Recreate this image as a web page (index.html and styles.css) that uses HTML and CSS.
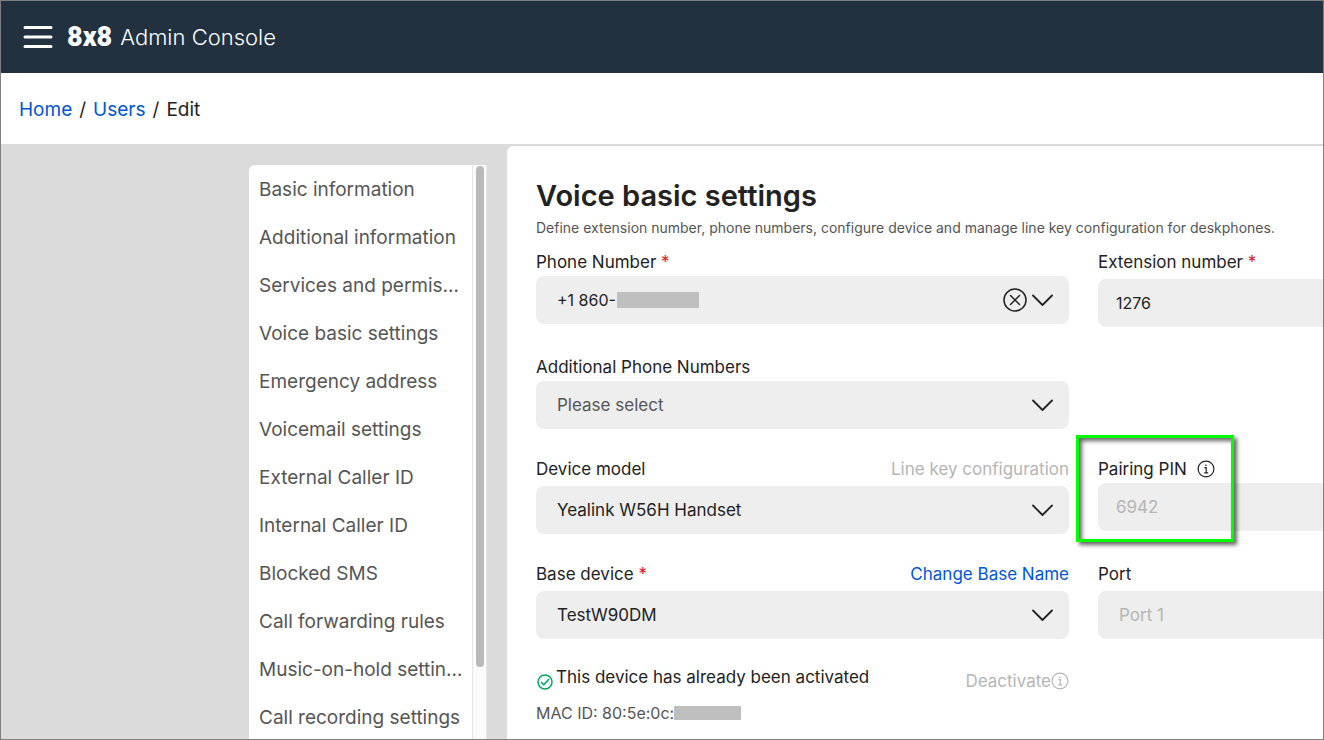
FILE: index.html
```html
<!DOCTYPE html>
<html lang="en">
<head>
    <meta charset="UTF-8">
    <meta name="viewport" content="width=device-width, initial-scale=1.0">
    <title>8x8 Admin Console</title>
    <link rel="stylesheet" href="styles.css">
</head>
<body>
    <header class="topbar">
        <button class="menu-button" type="button" aria-label="Menu">
            <svg width="30" height="24" viewBox="0 0 30 24" fill="none" stroke="#fff" stroke-width="3" stroke-linecap="round">
                <path d="M2 2.5h26M2 12h26M2 21.5h26"/>
            </svg>
        </button>
        <span class="logo">8x8</span>
        <span class="app-name">Admin Console</span>
    </header>

    <nav class="breadcrumb" aria-label="Breadcrumb">
        <a href="#">Home</a>
        <span>/</span>
        <a href="#">Users</a>
        <span>/</span>
        <span>Edit</span>
    </nav>

    <main class="page">
        <aside class="sidebar">
            <nav class="side-nav" aria-label="Sections">
                <a href="#">Basic information</a>
                <a href="#">Additional information</a>
                <a href="#">Services and permissions</a>
                <a href="#">Voice basic settings</a>
                <a href="#">Emergency address</a>
                <a href="#">Voicemail settings</a>
                <a href="#">External Caller ID</a>
                <a href="#">Internal Caller ID</a>
                <a href="#">Blocked SMS</a>
                <a href="#">Call forwarding rules</a>
                <a href="#">Music-on-hold settings</a>
                <a href="#">Call recording settings</a>
            </nav>
            <div class="scrollbar"><div class="thumb"></div></div>
        </aside>

        <section class="panel">
            <h1>Voice basic settings</h1>
            <p class="intro">Define extension number, phone numbers, configure device and manage line key configuration for deskphones.</p>

            <form class="form-grid">
                <div class="field">
                    <div class="label-row">
                        <label for="phone">Phone Number <span class="required">*</span></label>
                    </div>
                    <div class="control">
                        <select id="phone" class="number"><option>+1 860-</option></select>
                        <span class="mask mask-phone"></span>
                        <button class="clear-button" type="button" aria-label="Clear">
                            <svg width="24" height="24" viewBox="0 0 24 24" fill="none" stroke="#222" stroke-width="1.5" stroke-linecap="round">
                                <circle cx="12" cy="12" r="11"/>
                                <path d="M7.5 7.5l9 9M16.5 7.5l-9 9"/>
                            </svg>
                        </button>
                        <svg class="chevron" width="22" height="14" viewBox="0 0 22 14"><path d="M2 2.5l9.5 9.5L21 2.5"/></svg>
                    </div>
                </div>

                <div class="field">
                    <div class="label-row roomy">
                        <label for="extension">Extension number <span class="required">*</span></label>
                    </div>
                    <input id="extension" class="number" type="text" value="1276">
                </div>

                <div class="field">
                    <div class="label-row">
                        <label for="additional">Additional Phone Numbers</label>
                    </div>
                    <div class="control">
                        <select id="additional" class="empty"><option>Please select</option></select>
                        <svg class="chevron" width="22" height="14" viewBox="0 0 22 14"><path d="M2 2.5l9.5 9.5L21 2.5"/></svg>
                    </div>
                </div>

                <div class="field new-row">
                    <div class="label-row roomy">
                        <label for="model">Device model</label>
                        <button class="text-button" type="button" disabled>Line key configuration</button>
                    </div>
                    <div class="control">
                        <select id="model"><option>Yealink W56H Handset</option></select>
                        <svg class="chevron" width="22" height="14" viewBox="0 0 22 14"><path d="M2 2.5l9.5 9.5L21 2.5"/></svg>
                    </div>
                </div>

                <div class="field pin-field">
                    <div class="label-row with-icon">
                        <label for="pin">Pairing PIN</label>
                        <svg width="18" height="18" viewBox="0 0 18 18" fill="none" stroke="#222" stroke-width="1.2">
                            <circle cx="9" cy="9" r="7.9"/>
                            <path d="M7.4 7.7h1.8v5M7.2 12.8h4"/>
                            <circle cx="8.9" cy="5.2" r="0.5" fill="#222" stroke-width="0.6"/>
                        </svg>
                    </div>
                    <input id="pin" type="text" value="6942" disabled>
                    <div class="highlight"></div>
                </div>

                <div class="field">
                    <div class="label-row roomy">
                        <label for="base">Base device <span class="required">*</span></label>
                        <button class="text-button" type="button">Change Base Name</button>
                    </div>
                    <div class="control">
                        <select id="base"><option>TestW90DM</option></select>
                        <svg class="chevron" width="22" height="14" viewBox="0 0 22 14"><path d="M2 2.5l9.5 9.5L21 2.5"/></svg>
                    </div>
                </div>

                <div class="field">
                    <div class="label-row roomy">
                        <label for="port">Port</label>
                    </div>
                    <select id="port" disabled><option>Port 1</option></select>
                </div>

                <div class="device-status">
                    <div class="status-line">
                        <svg width="18" height="18" viewBox="0 0 18 18" fill="none" stroke="#00a95c" stroke-width="1.5" stroke-linecap="round" stroke-linejoin="round">
                            <circle cx="9" cy="9" r="7"/>
                            <path d="M5.5 9.5l2.3 2.3 4.9-5.6"/>
                        </svg>
                        <span class="status-text">This device has already been activated</span>
                        <button class="text-button deactivate" type="button" disabled>
                            Deactivate
                            <svg width="18" height="18" viewBox="0 0 18 18" fill="none" stroke="#b5b5b5" stroke-width="1.2">
                                <circle cx="9" cy="9" r="7.9"/>
                                <path d="M7.4 7.7h1.8v5M7.2 12.8h4"/>
                                <circle cx="8.9" cy="5.2" r="0.5" fill="#b5b5b5" stroke-width="0.6"/>
                            </svg>
                        </button>
                    </div>
                    <div class="mac">MAC ID: 80:5e:0c:<span class="mask mask-mac"></span></div>
                </div>
            </form>
        </section>
    </main>
</body>
</html>
```
FILE: styles.css
```css
* {
    box-sizing: border-box;
}

body {
    margin: 0;
    height: 100vh;
    display: flex;
    flex-direction: column;
    overflow: hidden;
    border: 1px solid #7f7f7f;
    font-family: Inter, sans-serif;
    font-size: 17px;
    line-height: 20px;
    color: #222;
    background: #fff;
}

button {
    padding: 0;
    border: 0;
    background: none;
    font: inherit;
}

svg {
    display: block;
    flex: none;
}

a {
    color: #0056d6;
    text-decoration: none;
}

/* Top bar */
.topbar {
    flex: none;
    display: flex;
    align-items: center;
    height: 72px;
    padding-left: 22px;
    background: #213140;
    color: #fff;
}

.logo {
    margin: 0 8px 0 14px;
    font-family: Roboto, sans-serif;
    font-size: 27px;
    font-weight: 900;
}

.app-name {
    font-size: 22px;
    font-weight: 300;
}

.breadcrumb {
    flex: none;
    display: flex;
    align-items: center;
    gap: 7px;
    height: 71px;
    padding: 2px 0 0 18px;
    font-size: 19px;
}

/* Page body */
.page {
    flex: 1;
    min-height: 0;
    display: flex;
    gap: 20px;
    padding: 2px 0 0 248px;
    background: #dbdbdb;
}

.sidebar {
    flex: none;
    display: flex;
    width: 238px;
    margin-top: 19px;
    border-radius: 6px 0 0 0;
    background: #fff;
    overflow: hidden;
}

.side-nav {
    flex: 1;
    min-width: 0;
    padding-top: 1px;
}

.side-nav a {
    display: block;
    padding: 0 8px 0 10px;
    font-size: 19px;
    line-height: 48px;
    color: #555;
    white-space: nowrap;
    overflow: hidden;
    text-overflow: ellipsis;
}

.scrollbar {
    width: 15px;
    padding: 1px 3px;
    border: solid #e6e6e6;
    border-width: 0 1px;
    background: #fafafa;
}

.thumb {
    width: 8px;
    height: 501px;
    border-radius: 4px;
    background: #b9b9b9;
}

.panel {
    flex: 1 0 auto;
    padding: 32px 29px 0;
    border-radius: 6px 0 0 0;
    background: #fff;
}

h1 {
    margin: 0;
    font-size: 29px;
    font-weight: 600;
    line-height: 36px;
}

.intro {
    margin: 4px 0 14px;
    font-size: 14px;
    color: #555;
}

/* Form */
.form-grid {
    display: grid;
    grid-template-columns: repeat(2, minmax(533px, 1fr));
    gap: 30px 29px;
    align-items: start;
}

.new-row {
    grid-column: 1;
}

.label-row {
    display: flex;
    justify-content: space-between;
    margin-bottom: 4px;
}

.label-row.roomy {
    margin-bottom: 7px;
}

.label-row.with-icon {
    justify-content: flex-start;
    align-items: center;
    gap: 10px;
}

.required {
    color: #d9152c;
}

.control {
    position: relative;
}

input,
select {
    display: block;
    width: 100%;
    height: 48px;
    padding: 0 18px;
    border: 0;
    border-radius: 8px;
    background: #eee;
    font: inherit;
    color: #222;
    appearance: none;
}

select {
    padding: 0 21px;
}

.number {
    font-size: 16px;
}

select.empty {
    color: #555;
}

input:disabled,
select:disabled,
.text-button:disabled {
    color: #b5b5b5;
    opacity: 1;
}

.text-button {
    color: #0056d6;
}

.chevron {
    position: absolute;
    top: 17px;
    right: 16px;
    fill: none;
    stroke: #222;
    stroke-width: 1.8;
    stroke-linecap: round;
    stroke-linejoin: round;
    pointer-events: none;
}

.clear-button {
    position: absolute;
    top: 12px;
    right: 42px;
}

.mask {
    background: #bfbfbf;
}

.mask-phone {
    position: absolute;
    top: 16px;
    left: 81px;
    width: 82px;
    height: 16px;
}

.mask-mac {
    width: 67px;
    height: 14px;
}

.pin-field {
    position: relative;
}

.highlight {
    position: absolute;
    top: -24px;
    left: -22px;
    width: 158px;
    height: 107px;
    border: 3px solid #0f0;
    box-shadow: 3px 3px 4px rgba(0, 0, 0, 0.6), inset 3px 3px 4px rgba(0, 0, 0, 0.6);
    pointer-events: none;
}

/* Device status */
.device-status {
    margin-top: -2px;
}

.status-line {
    display: flex;
    align-items: flex-end;
    gap: 2px;
    height: 24px;
}

.status-text {
    align-self: flex-start;
}

.deactivate {
    display: flex;
    align-items: center;
    margin-left: auto;
}

.mac {
    display: flex;
    align-items: center;
    margin-top: 12px;
    font-size: 16px;
    color: #555;
}
```
